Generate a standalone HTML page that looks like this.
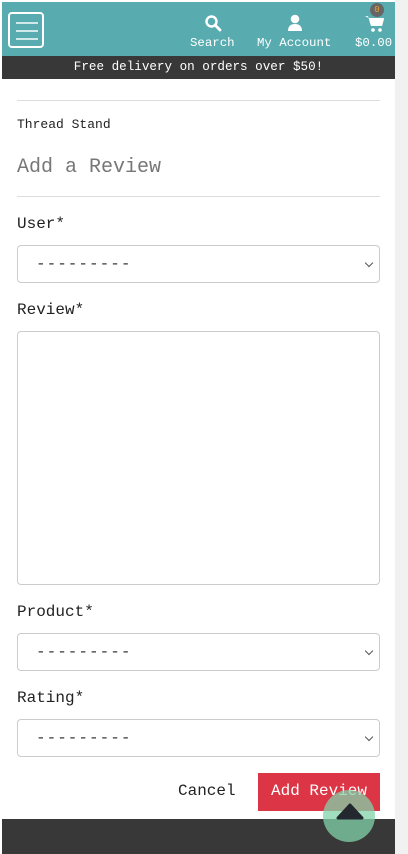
<!DOCTYPE html><html><head><style>
body{margin:0;width:408px;height:854px;overflow:hidden;background:#fff;font-family:"Liberation Mono",monospace;position:relative}
.sb{position:absolute;left:395px;top:0;width:13px;height:854px;background:#f1f1f1}
.hdr{position:absolute;left:2px;top:2px;width:393px;height:54px;background:#58acb0}
.ban{position:absolute;left:2px;top:56px;width:393px;height:23px;background:#383838;color:#fff;font-size:12.6px;text-align:center;line-height:23px}
.menu{position:absolute;left:6px;top:10px;width:36px;height:36px;border:2px solid #fff;border-radius:4px;box-sizing:border-box}
.menu i{position:absolute;left:6px;width:22px;height:2px;background:#cfe8ea}
.nav{position:absolute;color:#fff;font-size:12.4px;top:34px}
.hr{position:absolute;left:17px;width:363px;height:1px;background:#ddd}
.lbl{position:absolute;left:17px;font-size:16px;color:#222}
.sel{position:absolute;left:17px;width:363px;height:38px;border:1px solid #ccc;border-radius:4px;box-sizing:border-box;font-size:16px;color:#333;padding:9px 0 0 18px;letter-spacing:1px}
.sel:after{content:"";position:absolute;right:7px;top:14px;width:5px;height:5px;border-right:1.5px solid #555;border-bottom:1.5px solid #555;transform:rotate(45deg)}
</style></head><body>
<div class="sb"></div>
<div class="hdr">
<div class="menu"><i style="top:8px"></i><i style="top:16px"></i><i style="top:24px"></i></div>
<svg style="position:absolute;left:202px;top:12px" width="18" height="18" viewBox="0 0 18 18"><circle cx="7.5" cy="7.5" r="5" fill="none" stroke="#fff" stroke-width="2.4"/><path d="M11 11l5 5" stroke="#fff" stroke-width="2.8" stroke-linecap="round"/></svg>
<svg style="position:absolute;left:285px;top:12px" width="16" height="18" viewBox="0 0 16 18"><circle cx="8" cy="5" r="4.3" fill="#fff"/><path d="M1 17c0-5 3-7 7-7s7 2 7 7z" fill="#fff"/></svg>
<svg style="position:absolute;left:363px;top:13px" width="20" height="18" viewBox="0 0 20 18"><path d="M0 1h3l3 10h11l2-7H5" fill="#fff"/><path d="M4 3h15l-2 8H6z" fill="#fff"/><circle cx="8" cy="15" r="1.8" fill="#fff"/><circle cx="15" cy="15" r="1.8" fill="#fff"/></svg>
<div style="position:absolute;left:368px;top:1px;width:14px;height:14px;border-radius:7px;background:#666;color:#f0a030;font-size:9px;text-align:center;line-height:14px">0</div>
<div class="nav" style="left:188px">Search</div>
<div class="nav" style="left:255px">My Account</div>
<div class="nav" style="left:353px">$0.00</div>
</div>
<div class="ban">Free delivery on orders over $50!</div>
<div class="hr" style="top:100px"></div>
<div style="position:absolute;left:17px;top:117px;font-size:13px;color:#222">Thread Stand</div>
<div style="position:absolute;left:17px;top:156px;font-size:20px;color:#777">Add a Review</div>
<div class="hr" style="top:196px"></div>
<div class="lbl" style="top:215px">User*</div>
<div class="sel" style="top:245px">---------</div>
<div class="lbl" style="top:301px">Review*</div>
<div style="position:absolute;left:17px;top:331px;width:363px;height:254px;border:1px solid #ccc;border-radius:4px;box-sizing:border-box"></div>
<div class="lbl" style="top:603px">Product*</div>
<div class="sel" style="top:633px">---------</div>
<div class="lbl" style="top:689px">Rating*</div>
<div class="sel" style="top:719px">---------</div>
<div style="position:absolute;left:178px;top:782px;font-size:16px;color:#222">Cancel</div>
<div style="position:absolute;left:258px;top:773px;width:122px;height:38px;background:#dc3545;color:#fff;font-size:16px;text-align:center;line-height:36px">Add Review</div>
<div style="position:absolute;left:2px;top:819px;width:393px;height:35px;background:#383838"></div>
<div style="position:absolute;left:323px;top:790px;width:52px;height:52px;border-radius:26px;background:rgba(130,210,170,.75)"></div>
<svg style="position:absolute;left:336px;top:802px" width="28" height="18" viewBox="0 0 28 18"><path d="M2 16L14 3l12 13z" fill="#23282e" stroke="#23282e" stroke-width="3" stroke-linejoin="round"/></svg>
</body></html>
